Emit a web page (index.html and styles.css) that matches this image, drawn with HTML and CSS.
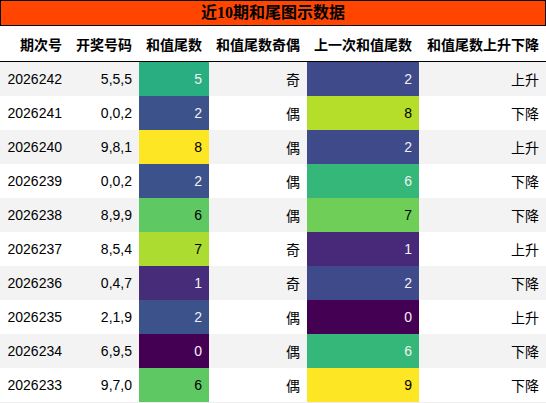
FILE: index.html
```html
<!DOCTYPE html>
<html lang="zh">
<head>
  <meta charset="UTF-8" />
  <title>近10期和尾图示数据</title>
  <link rel="stylesheet" href="styles.css">
</head>
<body>

  <div class="title">近10期和尾图示数据</div>

  <table class="data">
    <thead>
      <tr>
        <th class="c1">期次号</th>
        <th class="c2">开奖号码</th>
        <th class="c3">和值尾数</th>
        <th class="c4">和值尾数奇偶</th>
        <th class="c5">上一次和值尾数</th>
        <th class="c6">和值尾数上升下降</th>
      </tr>
    </thead>
    <tbody>
      <tr>
        <td>2026242</td><td>5,5,5</td>
        <td class="lt" style="background:#28ae80">5</td><td>奇</td>
        <td class="lt" style="background:#3e4a89">2</td><td>上升</td>
      </tr>
      <tr>
        <td>2026241</td><td>0,0,2</td>
        <td class="lt" style="background:#3b528b">2</td><td>偶</td>
        <td class="dk" style="background:#b5de2b">8</td><td>下降</td>
      </tr>
      <tr>
        <td>2026240</td><td>9,8,1</td>
        <td class="dk" style="background:#fde725">8</td><td>偶</td>
        <td class="lt" style="background:#3e4a89">2</td><td>上升</td>
      </tr>
      <tr>
        <td>2026239</td><td>0,0,2</td>
        <td class="lt" style="background:#3b528b">2</td><td>偶</td>
        <td class="lt" style="background:#35b779">6</td><td>下降</td>
      </tr>
      <tr>
        <td>2026238</td><td>8,9,9</td>
        <td class="dk" style="background:#5ec962">6</td><td>偶</td>
        <td class="dk" style="background:#6ece58">7</td><td>下降</td>
      </tr>
      <tr>
        <td>2026237</td><td>8,5,4</td>
        <td class="dk" style="background:#addc30">7</td><td>奇</td>
        <td class="lt" style="background:#482878">1</td><td>上升</td>
      </tr>
      <tr>
        <td>2026236</td><td>0,4,7</td>
        <td class="lt" style="background:#472c7a">1</td><td>奇</td>
        <td class="lt" style="background:#3e4a89">2</td><td>下降</td>
      </tr>
      <tr>
        <td>2026235</td><td>2,1,9</td>
        <td class="lt" style="background:#3b528b">2</td><td>偶</td>
        <td class="lt" style="background:#440154">0</td><td>上升</td>
      </tr>
      <tr>
        <td>2026234</td><td>6,9,5</td>
        <td class="lt" style="background:#440154">0</td><td>偶</td>
        <td class="lt" style="background:#35b779">6</td><td>下降</td>
      </tr>
      <tr>
        <td>2026233</td><td>9,7,0</td>
        <td class="dk" style="background:#5ec962">6</td><td>偶</td>
        <td class="dk" style="background:#fde725">9</td><td>下降</td>
      </tr>
    </tbody>
  </table>

</body>
</html>
```
FILE: styles.css
```css
body {
  margin: 0;
  background: #ffffff;
  font-family: 'Liberation Sans', 'Noto Sans CJK SC', sans-serif;
  color: #000000;
}

.title {
  width: 544px;
  height: 24px;
  line-height: 24px;
  background: #ff4500;
  border: 1px solid #000000;
  text-align: center;
  font-family: 'Liberation Serif', 'Noto Sans CJK SC', serif;
  font-size: 16px;
  font-weight: bold;
}

.data {
  width: 546px;
  border-collapse: collapse;
  font-size: 14px;
  border-bottom: 1px solid #eeeeee;
}

.data th,
.data td {
  padding: 0 7px;
  text-align: right;
  white-space: nowrap;
}

.data th {
  height: 35px;
  font-weight: bold;
  border-bottom: 1px solid #000000;
}

.data td {
  height: 34px;
}

.data tbody tr:nth-child(odd) {
  background: #f3f3f3;
}

.c1 { width: 55px; }
.c2 { width: 56px; }
.c3 { width: 56px; }
.c4 { width: 84px; }
.c5 { width: 98px; }
.c6 { width: 113px; }

.lt { color: #f1f1f1; }
.dk { color: #000000; }
```
